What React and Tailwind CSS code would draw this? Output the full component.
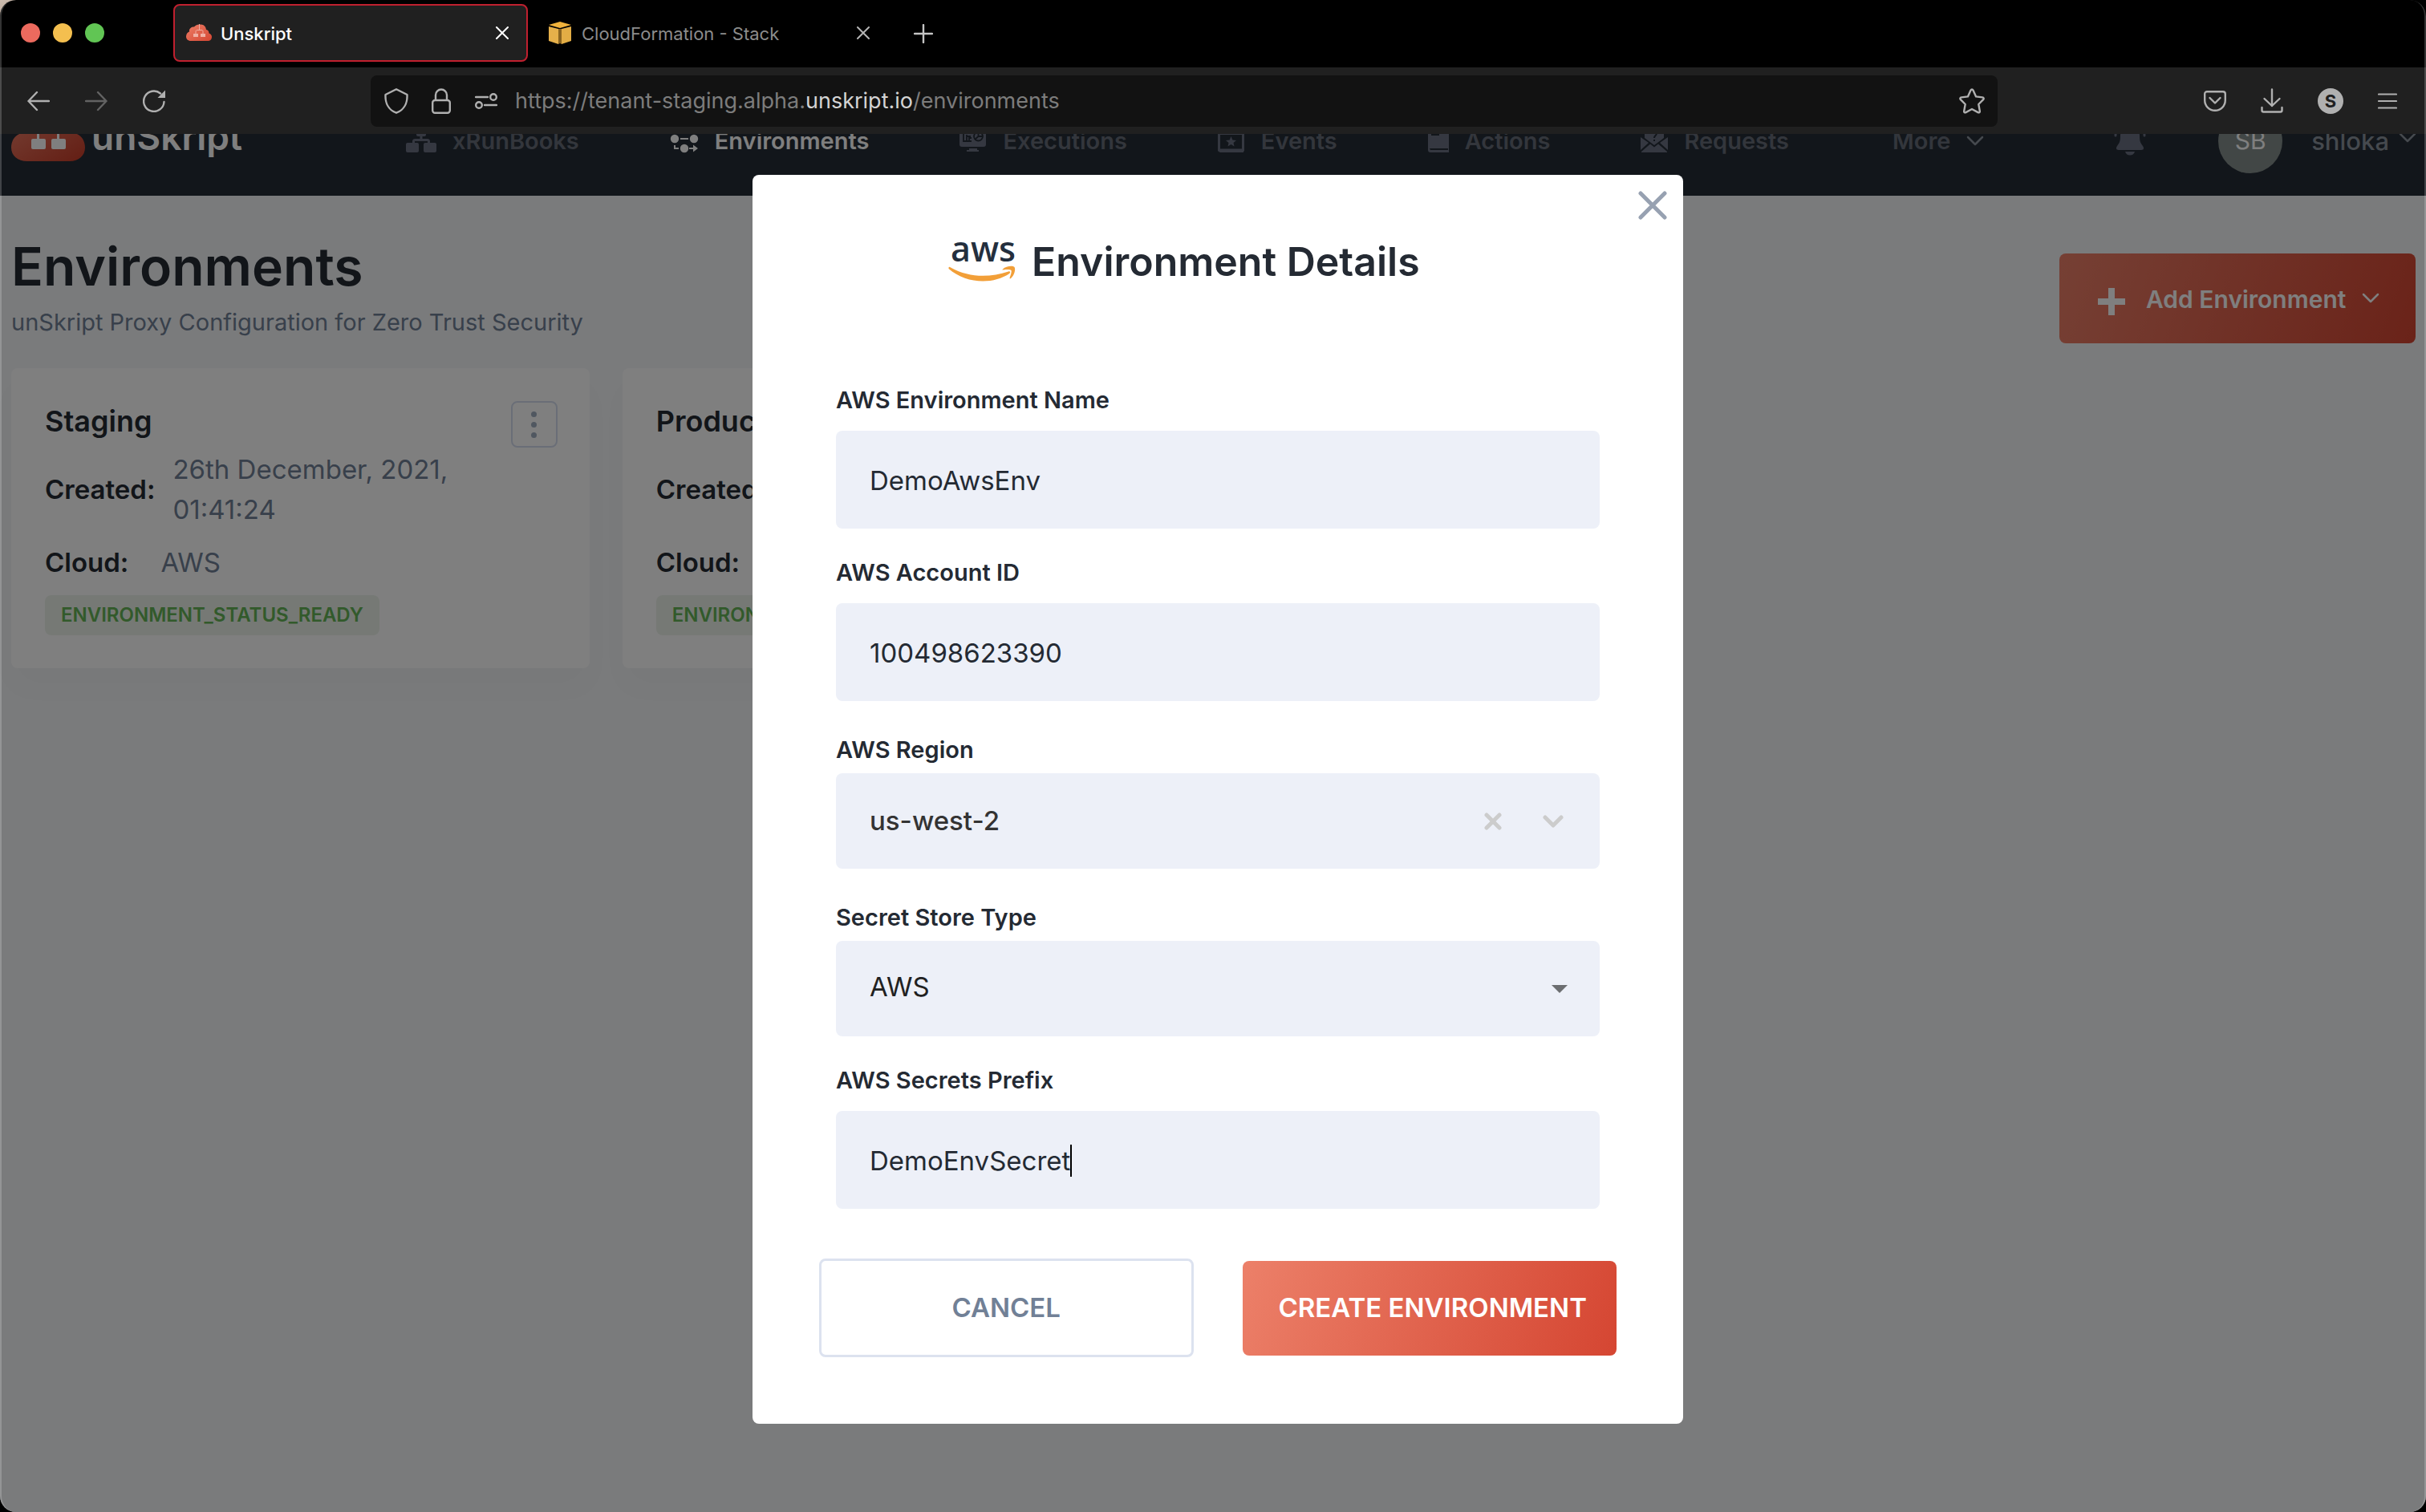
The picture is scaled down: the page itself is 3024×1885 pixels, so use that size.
import React from "react";

const CORAL_GRADIENT = "bg-linear-[110deg,#ec8069,#d54632]";

/* ---------- browser chrome icons ---------- */

function CrossIcon({ className }) {
  return (
    <svg viewBox="0 0 16 16" className={className} fill="none" stroke="currentColor" strokeWidth="2" strokeLinecap="round">
      <path d="M1 1 15 15M15 1 1 15" />
    </svg>
  );
}

function FaviconCloud() {
  return (
    <svg viewBox="0 0 32 22" className="w-8 h-[22px]">
      <defs>
        <linearGradient id="fav" x1="0" y1="0" x2="1" y2="1">
          <stop offset="0" stopColor="#ec7f68" />
          <stop offset="1" stopColor="#d54632" />
        </linearGradient>
      </defs>
      <path fill="url(#fav)" d="M6 21C2 21 0 18.500 0 15.500 0 12 2 10 4 9.500 3.500 6 6 3.500 10 3.500 12 1 15 0 18 0.500c4 0 6.500 2.500 7 6.500 3 .5 3.500 3 3.500 4.500 2.500 1 3.500 2.500 3.500 4.500 0 3-2 5-5 5z" />
      <g fill="none" stroke="#f0b0a4" strokeWidth="1">
        <path d="M16.500 0v7M12 12V9.500C12 8 13 7.500 14 7.500h5c1.500 0 2 .5 2 2V12" />
      </g>
      <path fill="#f0b0a4" d="M9 12h6v4H9zM18 12h6v4h-6z" />
    </svg>
  );
}

function FaviconCube() {
  return (
    <svg viewBox="0 0 28 28" className="size-7">
      <path fill="#f0b23c" d="M14 0 28 4 14 8 0 4z" />
      <path fill="#e6b04a" d="M0 6 12 9V28L0 24z" />
      <path fill="#e3ad45" d="M28 6 16 9V28L28 24z" />
      <path fill="#8a6420" d="M12 9h4v19l-2-1-2 1z" />
    </svg>
  );
}

function ArrowIcon({ flip }) {
  return (
    <svg viewBox="0 0 28 26" className={flip ? "w-7 h-[26px] text-[#636363] -scale-x-100" : "w-7 h-[26px] text-[#b0b0b0]"} fill="none" stroke="currentColor" strokeWidth="2.400" strokeLinecap="round" strokeLinejoin="round">
      <path d="M27 13H1.500M12 2 1.500 13 12 24" />
    </svg>
  );
}

function ReloadIcon() {
  return (
    <svg viewBox="0 0 28 28" className="size-7 text-[#b0b0b0]" fill="none" stroke="currentColor" strokeWidth="2.400" strokeLinecap="round">
      <path d="M26.500 15A12.700 12.700 0 1 1 22 4.500" />
      <path d="M28 .5V10h-9.500z" fill="currentColor" stroke="none" />
    </svg>
  );
}

function ShieldIcon() {
  return (
    <svg viewBox="0 0 30 32" className="w-[30px] h-8" fill="none" stroke="currentColor" strokeWidth="2.400" strokeLinejoin="round">
      <path d="M15 1.300 28.500 8C29 18 25 27 15 30.700 5 27 1 18 1.500 8z" />
    </svg>
  );
}

function LockIcon() {
  return (
    <svg viewBox="0 0 24 32" className="w-6 h-8" fill="none" stroke="currentColor" strokeWidth="2.400">
      <rect x="1.200" y="15" width="21.600" height="15.800" rx="3" />
      <path d="M5 15V8.500a7 7 0 0 1 14 0V15" />
    </svg>
  );
}

function PermissionsIcon() {
  return (
    <svg viewBox="0 0 28 20" className="w-7 h-5" fill="none" stroke="currentColor" strokeWidth="2.400" strokeLinecap="round">
      <path d="M1 5h15M12 15h15" />
      <circle cx="23" cy="5" r="3.800" />
      <circle cx="5" cy="15" r="3.800" />
    </svg>
  );
}

function StarIcon() {
  return (
    <svg viewBox="0 0 32 32" className="size-8" fill="none" stroke="currentColor" strokeWidth="2.400" strokeLinejoin="round">
      <path d="M16 1.500c.7 0 1.200.4 1.500 1l3.600 7.900 8 1c1.600.2 2 1.600 1 2.700L24.300 20l1.500 8.400c.3 1.600-.9 2.400-2.200 1.700L16 26l-7.600 4.100c-1.300.7-2.500-.1-2.200-1.700L7.700 20l-5.800-5.900c-1-1.100-.6-2.500 1-2.700l8-1 3.600-7.900c.3-.6.800-1 1.500-1z" />
    </svg>
  );
}

function PocketIcon() {
  return (
    <svg viewBox="0 0 28 26" className="w-7 h-[26px]" fill="none" stroke="currentColor" strokeWidth="2.400" strokeLinecap="round" strokeLinejoin="round">
      <path d="M4 1.200h20a2.800 2.800 0 0 1 2.800 2.800v8A12.800 12.800 0 0 1 1.200 12V4A2.800 2.800 0 0 1 4 1.200z" />
      <path d="m7.500 9 6.500 6.500L20.500 9" />
    </svg>
  );
}

function DownloadIcon() {
  return (
    <svg viewBox="0 0 28 32" className="w-7 h-8" fill="none" stroke="currentColor" strokeWidth="2.400" strokeLinecap="round" strokeLinejoin="round">
      <path d="M14 1.500V22M4.500 13 14 22l9.500-9M1.500 24v3.500a2 2 0 0 0 2 2h21a2 2 0 0 0 2-2V24" />
    </svg>
  );
}

function MenuIcon() {
  return (
    <svg viewBox="0 0 24 20" className="w-6 h-5" stroke="currentColor" strokeWidth="2.200" strokeLinecap="round">
      <path d="M1 1.500h22M1 10h22M1 18.500h22" />
    </svg>
  );
}

/* ---------- app icons ---------- */

function ChevronIcon({ className }) {
  return (
    <svg viewBox="0 0 22 14" className={className} fill="none" stroke="currentColor" strokeWidth="2.500" strokeLinecap="round" strokeLinejoin="round">
      <path d="m2 2 9 9 9-9" />
    </svg>
  );
}

function LogoMark() {
  return (
    <svg viewBox="0 0 92 50" className="w-[92px] h-[50px] overflow-visible">
      <defs>
        <linearGradient id="logo" x1="0" y1="0" x2="1" y2="1">
          <stop offset="0" stopColor="#ec8069" />
          <stop offset="1" stopColor="#c83c28" />
        </linearGradient>
      </defs>
      <path fill="url(#logo)" d="M20 50C8 50 0 43 0 33 0 24 5 17 13 15 12 4 24-3 34-1 42-12 68-10 72 8 78 8 80 12 79 15 87 17 92 24 92 33 92 43 84 50 73 50z" />
      <g fill="#fff">
        <path d="M32 10h3v13h-3zM57 10h3v13h-3z" />
        <rect x="25" y="22" width="18" height="13" rx="2" />
        <rect x="50" y="22" width="18" height="13" rx="2" />
      </g>
    </svg>
  );
}

const navIcons = {
  xRunBooks: (
    <svg viewBox="0 0 38 34" className="w-[38px] h-[34px] text-[#6a7082]" fill="currentColor">
      <rect x="13" y="3" width="12" height="8" rx="2" />
      <path d="M17.500 10h3v4h6c2 0 3.500 1 3.500 3v2h-3v-2H11v2H8v-2c0-2 1.500-3 3.500-3h6z" />
      <rect x="0" y="19" width="16" height="12" rx="2" />
      <rect x="22" y="19" width="16" height="12" rx="2" />
    </svg>
  ),
  Environments: (
    <svg viewBox="0 0 36 34" className="w-9 h-[34px]" fill="currentColor">
      <circle cx="6" cy="14" r="5.200" />
      <circle cx="30" cy="14" r="5.200" />
      <circle cx="18" cy="26" r="5.200" />
      <path d="M13 13h10v2H13zM5 22h2v3h4v2H5zM24 25h5v-3.500l6 4.500-6 4.500V27h-5z" />
    </svg>
  ),
  Executions: (
    <svg viewBox="0 0 34 34" className="size-[34px]">
      <path fill="#6a7082" d="M0 4a3 3 0 0 1 3-3h27a3 3 0 0 1 3 3v17a3 3 0 0 1-3 3H3a3 3 0 0 1-3-3zM12 26h10v2h2v2H9v-2h3z" />
      <g fill="none" stroke="#242c36" strokeWidth="1.800">
        <path d="M5 6v11h10M9 17V9M9 11h5M12 17v-4h3" />
        <circle cx="23.500" cy="11" r="5.500" />
        <path d="m19 15 4.500-4V5.500M23.500 11H29" />
      </g>
    </svg>
  ),
  Events: (
    <svg viewBox="0 0 34 34" className="size-[34px]">
      <path fill="none" stroke="#6a7082" strokeWidth="3" d="M1.500 6v22h30V6z" />
      <path fill="#6a7082" d="M0 4h33v5H0zM1 27h31v4H3l-2-1z" />
      <path fill="#6a7082" d="m16.500 11 1.800 4.500 4.700.4-3.500 3 1 4.600-4-2.400-4 2.400 1-4.600-3.500-3 4.700-.4z" />
    </svg>
  ),
  Actions: (
    <svg viewBox="0 0 26 34" className="w-[26px] h-[34px]">
      <path fill="#6a7082" d="M0 3h26v28H3c-2 0-3-1-3-3z" />
      <path fill="#242c36" d="M4 3h10v7H4zM2 26h23v2H3z" />
    </svg>
  ),
  Requests: (
    <svg viewBox="0 0 34 34" className="size-[34px]">
      <g fill="#6a7082">
        <path d="M0 12 10 19 0 28zM34 12 24 19 34 28zM1 30 12 20.500l5 4 5-4L33 30v1H1z" />
        <path d="M5 1h24v12l-12 9L5 13z" />
      </g>
      <path fill="none" stroke="#242c36" strokeWidth="2" d="M14 7c0-4 6-4 6 0 0 3-3 3-3 6M17 15v2" />
    </svg>
  ),
};

const navItems = ["xRunBooks", "Environments", "Executions", "Events", "Actions", "Requests"];

function BellIcon() {
  return (
    <svg viewBox="0 0 40 36" className="w-10 h-9 text-[#6a7082]" fill="currentColor">
      <path d="M20 0c8 0 12 5 12 11 0 7 1 9 4 13 2 3 1 5-2 5H6c-3 0-4-2-2-5 3-4 4-6 4-13C8 5 12 0 20 0z" />
      <path d="M14 31h12c-1 3-3 4.500-6 4.500S15 34 14 31z" />
      <path fill="none" stroke="currentColor" strokeWidth="3" strokeLinecap="round" d="M2 11C2 7 3 4 6 2M38 11c0-4-1-7-4-9" />
    </svg>
  );
}

function AwsLogo() {
  return (
    <svg viewBox="0 0 84 56" className="w-[84px] h-14 overflow-visible" role="img" aria-label="aws">
      <text x="3" y="29" fontFamily="Open Sans, sans-serif" fontSize="43" fontWeight="600" fill="#242f3e">aws</text>
      <g fill="#f29f38">
        <path d="M.5 36.500C1 35.500 2 35.800 3 36.500 26 49.500 52 49 75 41.500c2-.7 3 1 1.300 2.500C56 58 22 57 .5 38z" />
        <path d="M68 38.500c4-4 12.500-4.500 14.500-2.500 1.800 3-.2 10.500-4.500 14-1 .8-1.800.3-1.300-1 1.200-3 2.600-7.500 1.800-9-1.200-1.200-6-1-9.500-.6-1.200.1-1.500-.4-1-.9z" />
      </g>
    </svg>
  );
}

/* ---------- browser chrome ---------- */

function TabBar() {
  return (
    <div className="h-[84px] shrink-0 bg-black flex items-start pl-[26px] pt-[5px]">
      <div className="flex gap-4 h-[72px] items-center w-[190px]">
        <button aria-label="Close window" className="size-6 rounded-full bg-[#ec6a5e]" />
        <button aria-label="Minimise window" className="size-6 rounded-full bg-[#f4bf4f]" />
        <button aria-label="Zoom window" className="size-6 rounded-full bg-[#61c554]" />
      </div>
      <div className="w-[442px] h-[72px] rounded-lg border-2 border-[#c0202f] bg-[#202020] flex items-center pl-[14px] pr-[22px] text-white">
        <FaviconCloud />
        <span className="ml-[11px] pt-0.5 flex-1 text-[22px] font-medium">Unskript</span>
        <button aria-label="Close tab" className="text-white"><CrossIcon className="size-4" /></button>
      </div>
      <div className="w-[454px] h-[72px] flex items-center pl-[26px] pr-[28px] text-[#8c8c8c]">
        <FaviconCube />
        <span className="ml-[13px] pt-0.5 flex-1 text-[22px]">CloudFormation - Stack</span>
        <button aria-label="Close tab" className="text-[#b4b4b4]"><CrossIcon className="size-4" /></button>
      </div>
      <button aria-label="New tab" className="h-[72px] ml-[27px] pt-0.5 text-[#c4c4c4]">
        <svg viewBox="0 0 24 24" className="size-6" stroke="currentColor" strokeWidth="2.400" strokeLinecap="round"><path d="M12 1v22M1 12h22" /></svg>
      </button>
    </div>
  );
}

function Toolbar() {
  return (
    <div className="h-[83px] shrink-0 bg-[#202020] flex items-center pl-[34px] pr-9 text-[#b0b0b0]">
      <div className="w-[428px] flex items-center gap-11">
        <button aria-label="Back"><ArrowIcon /></button>
        <button aria-label="Forward"><ArrowIcon flip /></button>
        <button aria-label="Reload"><ReloadIcon /></button>
      </div>
      <div className="flex-1 h-16 rounded-lg bg-[#121212] flex items-center pl-[17px] pr-4">
        <button aria-label="Tracking protection" className="mr-[29px]"><ShieldIcon /></button>
        <button aria-label="Connection secure" className="mr-[30px]"><LockIcon /></button>
        <button aria-label="Permissions" className="mr-[22px]"><PermissionsIcon /></button>
        <p className="flex-1 pt-0.5 text-[27px] text-[#7c7c7c]">
          https://tenant-staging.alpha.<span className="text-[#d4d4d4]">unskript.io</span>/environments
        </p>
        <button aria-label="Bookmark"><StarIcon /></button>
      </div>
      <div className="w-[498px] flex items-center justify-end gap-[43px]">
        <button aria-label="Pocket"><PocketIcon /></button>
        <button aria-label="Downloads"><DownloadIcon /></button>
        <button aria-label="Account" className="size-8 rounded-full bg-[#b0b0b0] text-[#202020] text-[22px] font-bold leading-8 text-center">S</button>
        <button aria-label="Menu"><MenuIcon /></button>
      </div>
    </div>
  );
}

/* ---------- application page ---------- */

function NavBar() {
  return (
    <header className="h-[77px] overflow-hidden bg-[#242c36] flex flex-col justify-end">
      <div className="h-[136px] shrink-0 flex items-center pl-[14px] pr-3 text-[#676d79] text-[29px] font-semibold">
        <a href="#home" className="flex items-center gap-2 text-white text-[46px] font-semibold leading-none w-[492px]">
          <LogoMark />
          <span className="pb-3">unSkript</span>
        </a>
        <nav className="flex items-center gap-[113px]">
          {navItems.map((name) => (
            <a key={name} href={"#" + name} className={name === "Environments" ? "flex items-center gap-5 text-white" : "flex items-center gap-5"}>
              {navIcons[name]}
              {name}
            </a>
          ))}
          <button className="flex items-center gap-5 ml-4">
            More
            <ChevronIcon className="w-[22px] h-[14px] text-[#8a929c]" />
          </button>
        </nav>
        <div className="ml-auto flex items-center text-[#8a929c] font-medium text-[31px]">
          <button aria-label="Notifications"><BellIcon /></button>
          <span className="ml-[90px] size-20 rounded-full bg-[#848e8c] text-white text-[30px] font-normal leading-[78px] text-center">SB</span>
          <button className="ml-9 flex items-center gap-3">
            shloka
            <ChevronIcon className="mb-2 w-[22px] h-[14px]" />
          </button>
        </div>
      </div>
    </header>
  );
}

function EnvironmentCard({ name, created, cloud, status }) {
  return (
    <article className="bg-white rounded-lg pl-[42px] pr-10 py-[41px] shadow-[0_24px_40px_rgba(0,0,0,0.02)] text-[33px] leading-[50px] text-[#718096]">
      <div className="flex justify-between h-[58px]">
        <h2 className="text-[36px] leading-[50px] font-semibold text-[#242a33]">{name}</h2>
        <button aria-label={"Options for " + name} className="size-[58px] rounded-lg border-2 border-[#d5ddee] flex flex-col items-center justify-center gap-1.5">
          <span className="size-[7px] rounded-full bg-[#a0aec0]" />
          <span className="size-[7px] rounded-full bg-[#a0aec0]" />
          <span className="size-[7px] rounded-full bg-[#a0aec0]" />
        </button>
      </div>
      <div className="mt-0.5 flex items-center pr-14">
        <span className="font-semibold text-[#242a33]">Created:</span>
        <span className="ml-[22px]">{created}</span>
      </div>
      <div className="mt-4 flex">
        <span className="font-semibold text-[#242a33]">Cloud:</span>
        <span className="ml-10">{cloud}</span>
      </div>
      <span className="mt-4 block w-fit px-5 rounded-lg bg-[#ecf3ea] text-[#64b456] text-[24px] leading-[50px] font-semibold">{status}</span>
    </article>
  );
}

function EnvironmentsPage() {
  return (
    <main className="pl-[14px] pr-1 pt-[52px]">
      <div className="flex justify-between items-start pr-[9px]">
        <div>
          <h1 className="text-[66px] leading-[72px] font-semibold text-[#242a33]">Environments</h1>
          <p className="mt-3.5 text-[29px] leading-10 text-[#718096]">unSkript Proxy Configuration for Zero Trust Security</p>
        </div>
        <button className={"mt-5 h-28 w-[444px] rounded-lg flex items-center pl-12 text-white text-[30px] font-semibold " + CORAL_GRADIENT}>
          <svg viewBox="0 0 34 34" className="mt-2 size-[34px]" stroke="currentColor" strokeWidth="8"><path d="M17 0v34M0 17h34" /></svg>
          <span className="ml-[26px] pt-0.5">Add Environment</span>
          <ChevronIcon className="ml-5 w-[22px] h-[14px]" />
        </button>
      </div>
      <div className="mt-[31px] grid grid-cols-4 gap-[41px]">
        <EnvironmentCard name="Staging" created="26th December, 2021, 01:41:24" cloud="AWS" status="ENVIRONMENT_STATUS_READY" />
        <EnvironmentCard name="Production" created="26th December, 2021, 01:41:24" cloud="AWS" status="ENVIRONMENT_STATUS_READY" />
      </div>
    </main>
  );
}

/* ---------- dialog ---------- */

const labelStyle = "block text-[29px] leading-9 font-semibold text-[#242a33]";

function TextField({ id, label, value, caret }) {
  return (
    <div>
      <label htmlFor={id} className={labelStyle}>{label}</label>
      <div className="relative mt-5">
        <input id={id} defaultValue={value} className="block w-full h-[122px] rounded-lg bg-[#edf0f8] px-[42px] pt-0.5 text-[33px] text-[#242a33] outline-none" />
        {caret && <span className="absolute left-[292px] top-[42px] w-0.5 h-10 bg-black" />}
      </div>
    </div>
  );
}

function SelectField({ id, label, value, className, children }) {
  return (
    <div>
      <label htmlFor={id} className={labelStyle}>{label}</label>
      <div className="mt-[11px] h-[119px] rounded-lg bg-[#edf0f8] flex items-center pr-10">
        <select id={id} defaultValue={value} className={"appearance-none flex-1 h-full pl-[42px] text-[33px] outline-none bg-transparent " + className}>
          <option>{value}</option>
        </select>
        {children}
      </div>
    </div>
  );
}

function EnvironmentDialog() {
  return (
    <form role="dialog" aria-labelledby="dialog-title" className="relative mt-[51px] w-[1160px] rounded-lg bg-white pt-[75px] pb-[83px]">
      <button type="button" aria-label="Close" className="absolute right-5 top-5 text-[#97a1b1]">
        <svg viewBox="0 0 36 36" className="size-9" fill="none" stroke="currentColor" strokeWidth="5" strokeLinecap="round"><path d="m3 3 30 30M33 3 3 33" /></svg>
      </button>
      <div className="h-16 pl-[244px] flex items-center gap-5">
        <AwsLogo />
        <h2 id="dialog-title" className="pt-0.5 text-[50px] leading-[64px] font-semibold text-[#242a33]">Environment Details</h2>
      </div>
      <div className="mt-[124px] px-[104px]">
        <div className="flex flex-col gap-[37px]">
          <TextField id="env-name" label="AWS Environment Name" value="DemoAwsEnv" />
          <TextField id="account-id" label="AWS Account ID" value="100498623390" />
        </div>
        <div className="mt-[43px] mb-[37px] flex flex-col gap-[43px]">
          <SelectField id="region" label="AWS Region" value="us-west-2" className="text-[#333333] font-medium">
            <button type="button" aria-label="Clear region" className="text-[#cccccc]">
              <svg viewBox="0 0 22 22" className="size-[22px]" fill="none" stroke="currentColor" strokeWidth="5" strokeLinecap="round"><path d="m3 3 16 16M19 3 3 19" /></svg>
            </button>
            <svg viewBox="0 0 28 18" className="ml-[50px] mr-1 w-7 h-[18px] text-[#cccccc]" fill="none" stroke="currentColor" strokeWidth="5" strokeLinecap="round" strokeLinejoin="round"><path d="m4 4 10 10L24 4" /></svg>
          </SelectField>
          <SelectField id="store" label="Secret Store Type" value="AWS" className="pb-1 text-[#212121]">
            <svg viewBox="0 0 20 10" className="w-5 h-2.5 fill-[#6c6e71]"><path d="M0 0h20L10 10z" /></svg>
          </SelectField>
        </div>
        <TextField id="prefix" label="AWS Secrets Prefix" value="DemoEnvSecret" caret />
      </div>
      <div className="mt-[62px] px-[83px] grid grid-cols-2 gap-[61px] items-center">
        <button type="button" className="h-[123px] rounded-lg border-[3px] border-[#dce2ef] text-[33px] font-semibold text-[#718096]">CANCEL</button>
        <button type="submit" className={"h-[118px] rounded-lg pl-2 whitespace-nowrap text-[33px] font-semibold text-white " + CORAL_GRADIENT}>CREATE ENVIRONMENT</button>
      </div>
    </form>
  );
}

export default function App() {
  return (
    <div className="min-h-screen flex flex-col bg-linear-to-br from-[#cdbcae] to-black to-10% font-['Inter',sans-serif]">
      <div className="relative flex-1 flex flex-col overflow-hidden rounded-[20px]">
        <TabBar />
        <Toolbar />
        <div className="relative flex-1 bg-[#f4f6f8]">
          <NavBar />
          <EnvironmentsPage />
          <div className="absolute inset-0 pl-3 bg-black/50 flex items-start justify-center">
            <EnvironmentDialog />
          </div>
        </div>
        <div className="pointer-events-none absolute inset-0 rounded-[20px] border-x-2 border-white/20" />
      </div>
    </div>
  );
}
